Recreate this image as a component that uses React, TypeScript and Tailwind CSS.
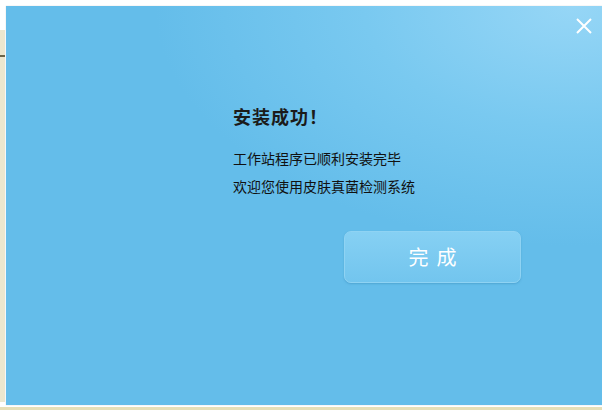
import React from "react";

const App: React.FC = () => {
  return (
    <div className="w-[602px] h-[410px] bg-white relative overflow-hidden font-['Noto_Sans_CJK_SC',sans-serif]">
      {/* window behind the dialog */}
      <div className="absolute left-0 top-[30px] w-[5px] h-[372px] bg-[#ebe7cf]">
        <div className="mt-[25px] h-[2px] bg-[#6b6448]" />
      </div>
      <div className="absolute left-0 bottom-0 w-full h-[3px] bg-[#e6dfb8]" />

      <div className="pt-[6px] pl-[6px]">
        <div className="relative w-[596px] h-[399px] bg-[radial-gradient(ellipse_70%_60%_at_95%_0%,#96d6f6_0%,#79c9f0_50%,#64bdea_100%)] shadow-[0_0_1px_rgba(0,0,0,0.2)]">
          <button
            className="absolute right-[8px] top-[10px] w-[20px] h-[20px] flex items-center justify-center"
            aria-label="关闭"
          >
            <svg width="18" height="18" viewBox="0 0 18 18">
              <path d="M2 2 L16 16 M16 2 L2 16" stroke="#ffffff" strokeWidth="2" />
            </svg>
          </button>

          <div className="pl-[227px] pt-[97px] flex flex-col">
            <h1 className="text-[18px] leading-[26px] font-bold text-[#1b1b1b] tracking-[1px]">
              安装成功！
            </h1>
            <p className="mt-[15px] text-[14px] leading-[28px] text-[#111]">
              工作站程序已顺利安装完毕
            </p>
            <p className="text-[14px] leading-[28px] text-[#111]">
              欢迎您使用皮肤真菌检测系统
            </p>
            <div className="pl-[111px] mt-[31px]">
              <button className="w-[177px] h-[52px] rounded-[7px] border border-[#8fd3f3] bg-[linear-gradient(180deg,#86d0f3_0%,#72c5ee_100%)] shadow-[0_1px_2px_rgba(40,120,170,0.35)] text-white text-[20px] tracking-[8px] pl-[8px]">
                完成
              </button>
            </div>
          </div>
        </div>
      </div>
    </div>
  );
};

export default App;
